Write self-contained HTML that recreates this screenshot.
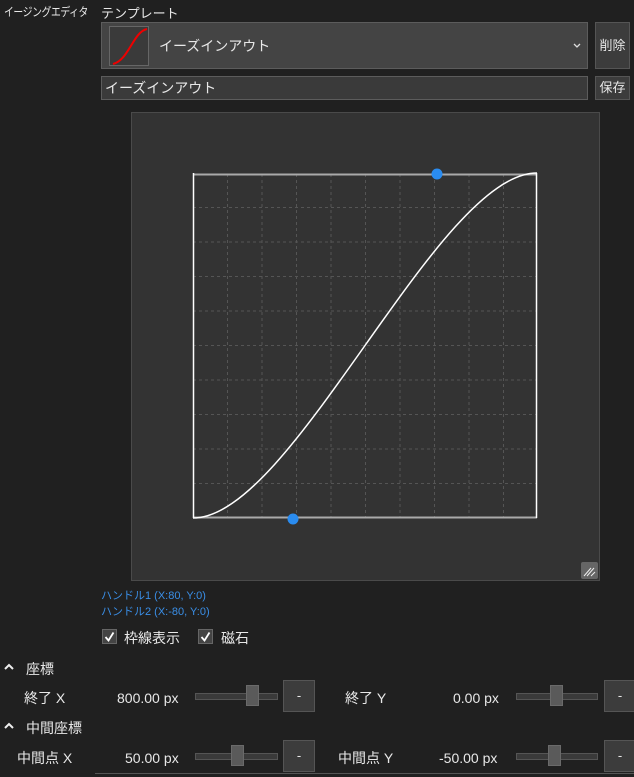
<!DOCTYPE html><html><head><meta charset="utf-8"><style>
body{margin:0;width:634px;height:777px;background:#202020;color:#e8e8e8;font-family:"Liberation Sans","Noto Sans CJK JP",sans-serif;position:relative;overflow:hidden;font-size:13px}
.a{position:absolute;white-space:nowrap;line-height:1}
.btn{position:absolute;background:#3c3c3c;border:1px solid #555;box-sizing:border-box;text-align:center}
.sl{position:absolute;height:5px;background:#3a3a3a;border:1px solid #555}
.th{position:absolute;width:13px;height:21px;background:#5a5a5a;border:1px solid #6a6a6a;box-sizing:border-box}
.cb{position:absolute;width:15px;height:15px;background:#444;border:1px solid #666;box-sizing:border-box}
</style></head><body>
<div class="a" style="left:4px;top:6px;font-size:12px;transform:scaleX(0.82);transform-origin:0 0;letter-spacing:-0.5px">イージングエディタ</div>
<div class="a" style="left:101px;top:7px;font-size:13px">テンプレート</div>
<div class="a" style="left:101px;top:22px;width:487px;height:47px;background:#444;border:1px solid #5c5c5c;box-sizing:border-box"></div>
<svg class="a" style="left:109px;top:26px" width="40" height="40"><rect x="0.5" y="0.5" width="39" height="39" fill="#3a3a3a" stroke="#666"/><path d="M4 38 C20 34,24 6,38 3" stroke="#e00" stroke-width="2" fill="none"/></svg>
<div class="a" style="left:159px;top:39px;font-size:14px">イーズインアウト</div>
<svg class="a" style="left:573px;top:43px" width="8" height="6"><path d="M1 1l3 3 3-3" stroke="#ddd" stroke-width="1.3" fill="none"/></svg>
<div class="btn" style="left:595px;top:22px;width:35px;height:47px;line-height:45px;font-size:13px">削除</div>
<div class="a" style="left:101px;top:76px;width:487px;height:24px;background:#3a3a3a;border:1px solid #5c5c5c;box-sizing:border-box;padding-left:3px;line-height:22px;font-size:14px">イーズインアウト</div>
<div class="btn" style="left:595px;top:76px;width:35px;height:24px;line-height:22px;font-size:13px">保存</div>
<svg class="a" style="left:0;top:0" width="634" height="600">
<rect x="131.5" y="112.5" width="468" height="468" fill="#333" stroke="#4a4a4a"/>
<g stroke="#555" stroke-dasharray="3,3" stroke-width="1">
<path d="M227.5 174V518M262 174V518M296.5 174V518M331 174V518M365.5 174V518M400 174V518M434.5 174V518M469 174V518M503.5 174V518"/>
<path d="M193 207.5H537M193 242H537M193 276.5H537M193 311H537M193 345.5H537M193 380H537M193 414.5H537M193 449H537M193 483.5H537"/>
</g>
<path d="M193 174.5H537M193 517.5H537" stroke="#aaa" stroke-width="2"/>
<path d="M193.5 173V518M536.5 173V518" stroke="#fff" stroke-width="1.5"/>
<path d="M193 518 C293 518,437 173,537 173" stroke="#fff" stroke-width="1.5" fill="none"/>
<circle cx="293" cy="519" r="5.5" fill="#2a8cf0"/><circle cx="437" cy="174" r="5.5" fill="#2a8cf0"/>
<rect x="581" y="562" width="17" height="17" rx="2" fill="#666"/>
<path d="M584 576l7-8M587 576l7-8M591 576l4-4" stroke="#eee" stroke-width="1"/>
</svg>
<div class="a" style="left:101px;top:591px;font-size:11px;color:#3a8ee6">ハンドル1 (X:80, Y:0)</div>
<div class="a" style="left:101px;top:607px;font-size:11px;color:#3a8ee6">ハンドル2 (X:-80, Y:0)</div>
<div class="cb" style="left:102px;top:629px"></div>
<svg class="a" style="left:102px;top:629px" width="15" height="15"><path d="M3.5 8l3 3.5 5-8" stroke="#fff" stroke-width="1.8" fill="none"/></svg>
<div class="a" style="left:124px;top:631px;font-size:14px">枠線表示</div>
<div class="cb" style="left:198px;top:629px"></div>
<svg class="a" style="left:198px;top:629px" width="15" height="15"><path d="M3.5 8l3 3.5 5-8" stroke="#fff" stroke-width="1.8" fill="none"/></svg>
<div class="a" style="left:221px;top:631px;font-size:14px">磁石</div>
<svg class="a" style="left:4px;top:663px" width="10" height="7"><path d="M1 6l4-4 4 4" stroke="#eee" stroke-width="2" fill="none"/></svg>
<div class="a" style="left:26px;top:662px;font-size:14px">座標</div>
<div class="a" style="left:24px;top:691px;font-size:14px">終了 X</div>
<div class="a" style="left:117px;top:691px;font-size:14px">800.00 px</div>
<div class="sl" style="left:195px;top:693px;width:81px"></div><div class="th" style="left:246px;top:685px"></div>
<div class="btn" style="left:283px;top:680px;width:32px;height:32px;line-height:30px">-</div>
<div class="a" style="left:345px;top:691px;font-size:14px">終了 Y</div>
<div class="a" style="left:453px;top:691px;font-size:14px">0.00 px</div>
<div class="sl" style="left:516px;top:693px;width:80px"></div><div class="th" style="left:550px;top:685px"></div>
<div class="btn" style="left:604px;top:680px;width:32px;height:32px;line-height:30px">-</div>
<svg class="a" style="left:4px;top:722px" width="10" height="7"><path d="M1 6l4-4 4 4" stroke="#eee" stroke-width="2" fill="none"/></svg>
<div class="a" style="left:26px;top:721px;font-size:14px">中間座標</div>
<div class="a" style="left:17px;top:751px;font-size:14px">中間点 X</div>
<div class="a" style="left:125px;top:751px;font-size:14px">50.00 px</div>
<div class="sl" style="left:195px;top:753px;width:81px"></div><div class="th" style="left:231px;top:745px"></div>
<div class="btn" style="left:283px;top:740px;width:32px;height:32px;line-height:30px">-</div>
<div class="a" style="left:338px;top:751px;font-size:14px">中間点 Y</div>
<div class="a" style="left:439px;top:751px;font-size:14px">-50.00 px</div>
<div class="sl" style="left:516px;top:753px;width:80px"></div><div class="th" style="left:548px;top:745px"></div>
<div class="btn" style="left:604px;top:740px;width:32px;height:32px;line-height:30px">-</div>
<div class="a" style="left:95px;top:773px;width:539px;height:1px;background:#555"></div>
</body></html>
